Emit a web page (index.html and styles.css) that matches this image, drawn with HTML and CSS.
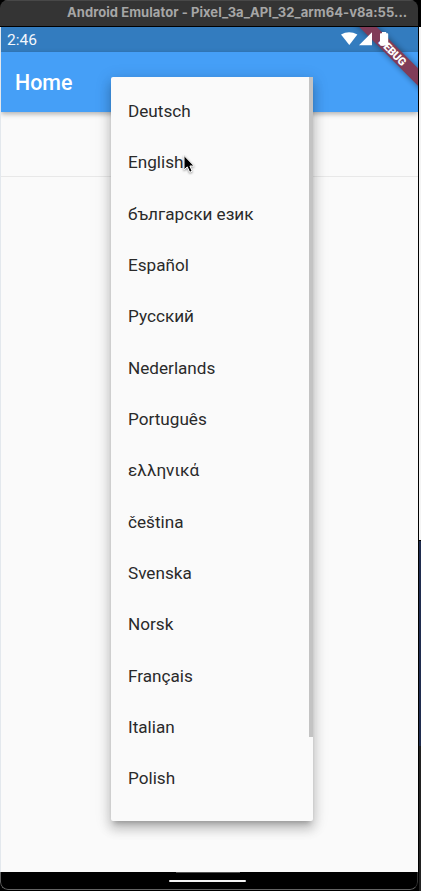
FILE: index.html
```html
<!DOCTYPE html>
<html lang="en">
<head>
<meta charset="utf-8">
<title>Home</title>
<link rel="stylesheet" href="styles.css">
</head>
<body>
<div class="desktop">
  <div class="window">
    <header class="titlebar">Android Emulator - Pixel_3a_API_32_arm64-v8a:55...</header>
    <main class="screen">
      <div class="statusbar"><span>2:46</span></div>
      <div class="appbar"><h1>Home</h1></div>
      <div class="field"></div>

      <svg class="banner" width="68" height="68" viewBox="350 27 68 68">
        <g transform="translate(393 52) rotate(45)">
          <rect class="banner-shadow" x="-60" y="-6.2" width="120" height="12.4"/>
          <rect x="-60" y="-6.2" width="120" height="12.4" fill="#813c58"/>
          <text x="-0.5" y="4" text-anchor="middle" textLength="34">DEBUG</text>
        </g>
      </svg>
      <svg class="status-icons" width="52" height="16" viewBox="340 31 52 16">
        <path d="M341 34.6Q349 29.8 357.400 34.600L349.300 45Z"/>
        <path d="M372 32.300V45.300H359Z"/>
        <path d="M382 32h4.200v1.200h1.300q.7 0 .7.700v10.900q0 .8-.7.800h-6.800q-.7 0-.7-.8V33.900q0-.7.7-.7H382z"/>
      </svg>

      <div class="menu">
        <ul>
          <li>Deutsch</li>
          <li>English</li>
          <li>български език</li>
          <li>Español</li>
          <li>Русский</li>
          <li>Nederlands</li>
          <li>Português</li>
          <li>ελληνικά</li>
          <li>čeština</li>
          <li>Svenska</li>
          <li>Norsk</li>
          <li>Français</li>
          <li>Italian</li>
          <li>Polish</li>
        </ul>
        <div class="scrollbar"></div>
      </div>

      <svg class="cursor" width="18" height="24" viewBox="0 0 18 24">
        <path d="M3 2.500V16.800L6.300 13.900L8.700 19.300L11.200 18.200L8.900 13H13.200Z" fill="#000" stroke="#fff" stroke-width="1"/>
      </svg>
    </main>
    <footer class="navbar"><i class="notch"></i><i class="handle"></i></footer>
  </div>
  <aside class="backdrop"><i class="light"></i><i class="navy"></i><i class="dark"></i></aside>
</div>
</body>
</html>
```
FILE: styles.css
```css
* { box-sizing: border-box; }
body { margin: 0; background: #000; font-family: Roboto, "Noto Sans", sans-serif; }
.desktop { display: flex; width: 421px; height: 891px; overflow: hidden; background: #000; }
.window { width: 418px; height: 890px; display: flex; flex-direction: column; border-radius: 8px; overflow: hidden; }
.titlebar {
  height: 26px; flex: none; padding-left: 67px; background: #343434; color: #a6a6a6;
  font: 700 13px/22px Inter, sans-serif; letter-spacing: 0.06px; white-space: nowrap;
  border-top: 1px solid #484848;
}
.screen { position: relative; height: 845px; margin-top: 1px; flex: none; background: #fafafa; overflow: hidden; border-left: 1px solid #e3e8ed; }
.statusbar { height: 25px; background: #337cbf; color: #f2f7fc; font-size: 15.500px; line-height: 26px; padding-left: 6px; }
.appbar { height: 60px; background: #459ff7; display: flex; align-items: center; padding-left: 14px; box-shadow: 0 2px 5px rgba(0,0,0,.3); }
.appbar h1 { margin: 1px 0 0; color: #fff; font-size: 21.400px; font-weight: 500; line-height: 24px; }
.field { height: 65px; border-bottom: 1px solid #e8e8e8; }
.banner { position: absolute; right: 0; top: 0; }
.banner text { fill: #fff; font: 900 11px Roboto, sans-serif; }
.banner-shadow { fill: #000; opacity: .42; filter: blur(3px); }
.status-icons { position: absolute; left: 339px; top: 4px; fill: #fff; }
.menu {
  position: absolute; left: 110px; top: 50px; width: 202px; height: 744px; background: #fafafa;
  border-radius: 2px; overflow: visible; display: flex; justify-content: space-between;
  box-shadow: 0 5px 5px -3px rgba(0,0,0,.22), 0 8px 11px 1px rgba(0,0,0,.15), 0 3px 15px 2px rgba(0,0,0,.13);
}
.menu ul { margin: 0; padding: 9px 0 0 17px; list-style: none; }
.menu li { height: 51.330px; line-height: 51.330px; font-size: 17.150px; color: #2a2a2a; white-space: nowrap; }
.scrollbar { width: 4px; height: 660px; background: #c3c3c3; }
.cursor { position: absolute; left: 179.500px; top: 126px; filter: drop-shadow(0 1px 1px rgba(0,0,0,.4)); }
.navbar { height: 18px; flex: none; background: #000; border: 1px solid #626262; border-top: 0; border-right-color: #333; border-radius: 0 0 8px 8px; display: flex; flex-direction: column; align-items: center; }
.notch { width: 64px; height: 1px; background: #505050; margin-left: -2px; }
.handle { width: 77px; height: 2px; margin-top: 7px; background: #f4f4f4; border-radius: 1px; margin-left: -3px; }
.backdrop { width: 3px; padding-left: 1px; display: flex; flex-direction: column; }
.light { height: 513px; margin-top: 27px; background: #f4f4f4; }
.navy { height: 205px; margin-top: 1px; background: #202d4f; }
.dark { flex: 1; background: #222; }
```
